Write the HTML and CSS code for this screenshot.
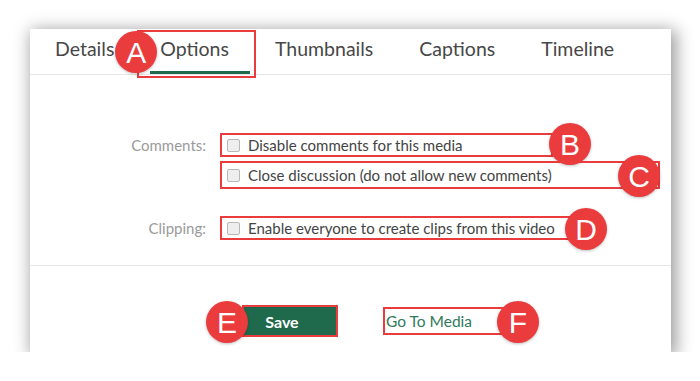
FILE: index.html
```html
<!DOCTYPE html>
<html lang="en">
<head>
  <meta charset="UTF-8">
  <meta name="viewport" content="width=device-width, initial-scale=1">
  <title>Media Options</title>
  <link rel="stylesheet" href="styles.css">
</head>
<body>
  <div class="panel">
    <ul class="tabs">
      <li class="tab">Details</li>
      <li class="tab active">
        Options
        <span class="mark mark-a"></span>
        <span class="badge badge-a">A</span>
      </li>
      <li class="tab">Thumbnails</li>
      <li class="tab">Captions</li>
      <li class="tab">Timeline</li>
    </ul>

    <section class="settings">
      <div class="field">
        <div class="field-label">Comments:</div>
        <div class="field-opts">
          <label class="opt opt-b">
            <input type="checkbox"> Disable comments for this media
            <span class="badge badge-b">B</span>
          </label>
          <label class="opt opt-c">
            <input type="checkbox"> Close discussion (do not allow new comments)
            <span class="badge badge-c">C</span>
          </label>
        </div>
      </div>
      <div class="field">
        <div class="field-label">Clipping:</div>
        <div class="field-opts">
          <label class="opt opt-d">
            <input type="checkbox"> Enable everyone to create clips from this video
            <span class="badge badge-d">D</span>
          </label>
        </div>
      </div>
    </section>

    <footer class="actions">
      <button class="btn-save">
        Save
        <span class="badge badge-e">E</span>
      </button>
      <a class="link-media" href="#">
        Go To Media
        <span class="badge badge-f">F</span>
      </a>
    </footer>
  </div>
</body>
</html>
```

FILE: styles.css
```css
:root {
  --green: #1f6a4d;
  --callout: #ea3b3d;
}

body {
  margin: 0;
  background: #fff;
  font-family: Lato, "Open Sans", sans-serif;
  color: #444;
}

.panel {
  margin: 29px 0 0 30px;
  width: 641px;
  height: 323px;
  background: #fff;
  box-shadow: 3px 3px 16px 2px rgba(0, 0, 0, 0.4);
  display: flex;
  flex-direction: column;
}

/* tabs */
.tabs {
  list-style: none;
  margin: 0;
  padding: 0 0 0 2px;
  display: flex;
  height: 45px;
  border-bottom: 1px solid #e6e6e6;
}

.tab {
  position: relative;
  padding: 0 23px;
  font-size: 19.5px;
  line-height: 39px;
  color: #474747;
  border-bottom: 3px solid transparent;
}

.tab.active {
  padding: 0 21px 0 10px;
  margin-left: 13px;
  margin-right: 2px;
  border-bottom-color: var(--green);
}

.mark-a {
  position: absolute;
  left: -13px;
  right: -6px;
  top: 1px;
  bottom: -7px;
  border: 2px solid var(--callout);
}

/* settings */
.settings {
  padding: 58px 0 25px;
  border-bottom: 1px solid #e6e6e6;
  display: flex;
  flex-direction: column;
  gap: 27px;
}

.field {
  display: grid;
  grid-template-columns: 176px 1fr;
  column-gap: 14px;
}

.field-label {
  text-align: right;
  font-size: 15px;
  line-height: 24px;
  color: #9a9a9a;
}

.field-opts {
  display: flex;
  flex-direction: column;
  gap: 4px;
}

.opt {
  position: relative;
  box-sizing: border-box;
  display: flex;
  align-items: center;
  gap: 8px;
  height: 24px;
  padding-left: 5px;
  border: 2px solid var(--callout);
  font-size: 15px;
  color: #444;
}

.opt-b { width: 333px; }
.opt-c { width: 440px; height: 28px; }
.opt-d { width: 355px; }

.opt input {
  appearance: none;
  margin: 0;
  width: 13px;
  height: 13px;
  border: 1px solid #b8b8b8;
  border-radius: 2px;
  background: #eee;
}

/* footer actions */
.actions {
  flex: 1;
  display: flex;
  align-items: flex-start;
  gap: 47px;
  padding: 41px 0 0 214px;
}

.btn-save {
  position: relative;
  width: 92px;
  height: 28px;
  padding: 0 16px 0 0;
  border: 0;
  background: var(--green);
  color: #fff;
  font-family: Lato, sans-serif;
  font-weight: bold;
  font-size: 16px;
  outline: 2px solid var(--callout);
}

.link-media {
  position: relative;
  box-sizing: border-box;
  display: flex;
  align-items: center;
  width: 127px;
  height: 28px;
  padding-left: 1px;
  border: 2px solid var(--callout);
  color: #2f7a5a;
  font-size: 15.5px;
  text-decoration: none;
}

/* callout badges */
.badge {
  position: absolute;
  width: 42px;
  height: 42px;
  border-radius: 50%;
  background: var(--callout);
  color: #fff;
  font-family: "Liberation Sans", Arial, sans-serif;
  font-weight: normal;
  font-size: 30px;
  line-height: 43px;
  text-align: center;
  box-shadow: 0 1px 3px rgba(0, 0, 0, 0.25);
}

.badge-a { left: -35px; top: 2px; }
.badge-b { right: -40px; top: -12px; }
.badge-c { right: -2px; top: -8px; }
.badge-d { right: -34px; top: -10px; }
.badge-e { left: -38px; top: -6px; }
.badge-f { left: 112px; top: -8px; }
```
